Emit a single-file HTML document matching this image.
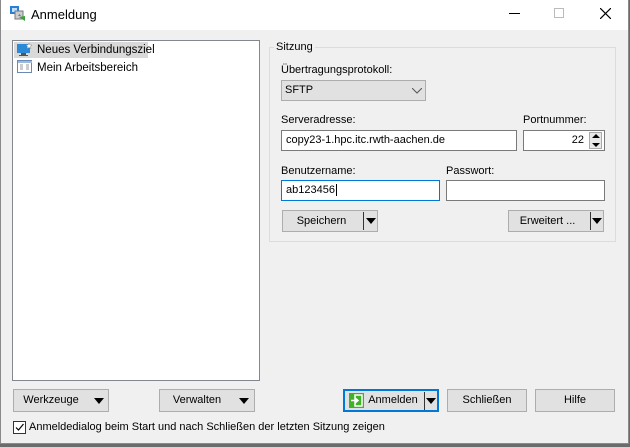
<!DOCTYPE html>
<html><head><meta charset="utf-8"><style>
*{box-sizing:border-box;margin:0;padding:0}
body{width:630px;height:447px;background:#6b6b6b;font-family:"Liberation Sans",sans-serif;font-size:11px;color:#000;position:relative;overflow:hidden}
.win{position:absolute;left:0;top:0;width:629px;height:444px;background:#f0f0f0}
.bd{position:absolute;left:0;top:0;width:629px;height:444px;border:1px solid #8a8a8a;border-top:none}
.title{position:absolute;left:0;top:0;width:628px;height:30px;background:#fff}
.a{position:absolute;white-space:nowrap}
.inp{position:absolute;background:#fff;border:1px solid #7a7a7a;padding:3px 4px;line-height:13px}
.btn{position:absolute;background:#e1e1e1;border:1px solid #adadad;text-align:center;line-height:20px}
.tri{position:absolute;width:0;height:0;border-left:5px solid transparent;border-right:5px solid transparent;border-top:6px solid #000}
</style></head><body>
<div class="win">
<div class="title">
<svg class="a" style="left:9px;top:5px" width="18" height="18" viewBox="0 0 18 18"><rect x="1" y="1" width="9" height="8" fill="#2a7fd4"/><rect x="3" y="3" width="5" height="4" fill="#bfe0ff"/><rect x="6" y="6" width="8" height="8" fill="#ccc" stroke="#777"/><path d="M9 11l3 0l-1.5 -2z M10 12l6 4l0-5z" fill="#3aa23a"/></svg>
<div class="a" style="left:31px;top:7px;font-size:13px">Anmeldung</div>
<div class="a" style="left:509px;top:13px;width:11px;height:1px;background:#000"></div>
<div class="a" style="left:554px;top:8px;width:10px;height:10px;border:1px solid #bbb"></div>
<svg class="a" style="left:600px;top:8px" width="11" height="11"><path d="M0 0L11 11M11 0L0 11" stroke="#000" stroke-width="1.2"/></svg>
</div>
<div class="a" style="left:12px;top:40px;width:248px;height:341px;background:#fff;border:1px solid #828790"></div>
<div class="a" style="left:14px;top:42px;width:134px;height:16px;background:#d9d9d9"></div>
<svg class="a" style="left:17px;top:43px" width="16" height="14"><rect x="0" y="1" width="13" height="9" fill="#2b8ad8"/><rect x="4" y="10" width="5" height="2" fill="#555"/><rect x="2" y="12" width="9" height="1" fill="#555"/><path d="M12 0l1 2 2 0-1.5 1.5.5 2-2-1-2 1 .5-2L9 2h2z" fill="#fff" stroke="#888" stroke-width=".5"/></svg>
<div class="a" style="left:37px;top:44px;font-size:11.5px">Neues Verbindungsziel</div>
<svg class="a" style="left:17px;top:60px" width="16" height="14"><rect x=".5" y=".5" width="14" height="12" fill="#fff" stroke="#6a8ab5"/><rect x="1" y="1" width="14" height="2" fill="#9cb8dc"/><path d="M3 5h3M3 7h3M3 9h3M9 5h3M9 7h3M9 9h3" stroke="#999"/></svg>
<div class="a" style="left:37px;top:62px;font-size:11.5px">Mein Arbeitsbereich</div>

<div class="a" style="left:269px;top:47px;width:347px;height:195px;border:1px solid #dcdcdc"></div>
<div class="a" style="left:274px;top:41px;background:#f0f0f0;padding:0 2px">Sitzung</div>
<div class="a" style="left:281px;top:64px">Übertragungsprotokoll:</div>
<div class="btn" style="left:281px;top:80px;width:145px;height:21px;text-align:left;padding-left:3px;line-height:19px">SFTP</div>
<svg class="a" style="left:412px;top:88px" width="10" height="6"><path d="M0 0L5 5L10 0" stroke="#555" fill="none"/></svg>
<div class="a" style="left:281px;top:114px">Serveradresse:</div>
<div class="inp" style="left:281px;top:130px;width:236px;height:21px">copy23-1.hpc.itc.rwth-aachen.de</div>
<div class="a" style="left:523px;top:114px">Portnummer:</div>
<div class="inp" style="left:523px;top:130px;width:82px;height:21px;text-align:right;padding-right:20px">22</div>
<div class="a" style="left:589px;top:132px;width:13px;height:17px;background:#e8e8e8;border:1px solid #aaa"></div>
<svg class="a" style="left:592px;top:134px" width="8" height="14"><path d="M0 4L4 0L8 4ZM0 9L8 9L4 13Z" fill="#000"/></svg>
<div class="a" style="left:281px;top:165px">Benutzername:</div>
<div class="inp" style="left:281px;top:180px;width:159px;height:21px;border-color:#0078d7">ab123456<span style="border-left:1px solid #000;margin-left:1px"></span></div>
<div class="a" style="left:446px;top:165px">Passwort:</div>
<div class="inp" style="left:446px;top:180px;width:159px;height:21px"></div>
<div class="btn" style="left:282px;top:210px;width:96px;height:22px;padding-right:17px">Speichern</div>
<div class="a" style="left:363px;top:212px;width:1px;height:18px;background:#333"></div>
<div class="tri" style="left:366px;top:218px"></div>
<div class="btn" style="left:508px;top:210px;width:96px;height:22px;padding-right:17px">Erweitert ...</div>
<div class="a" style="left:590px;top:212px;width:1px;height:18px;background:#333"></div>
<div class="tri" style="left:592px;top:218px"></div>

<div class="btn" style="left:13px;top:389px;width:96px;height:23px;padding-right:20px">Werkzeuge</div>
<div class="tri" style="left:94px;top:398px"></div>
<div class="btn" style="left:159px;top:389px;width:96px;height:23px;padding-right:20px">Verwalten</div>
<div class="tri" style="left:239px;top:398px"></div>
<div class="btn" style="left:343px;top:389px;width:96px;height:23px;border:2px solid #0078d7;padding-left:14px;padding-right:10px;line-height:19px">Anmelden</div>
<svg class="a" style="left:349px;top:393px" width="15" height="15"><rect width="15" height="15" fill="#43b02a"/><rect x="6" y="2" width="7" height="11" fill="none" stroke="#fff" stroke-width="1.5"/><path d="M2 7.5h6M6 5l3 2.5-3 2.5" stroke="#fff" stroke-width="1.5" fill="none"/></svg>
<div class="a" style="left:424px;top:392px;width:1px;height:18px;background:#333"></div>
<div class="tri" style="left:426px;top:398px"></div>
<div class="btn" style="left:447px;top:389px;width:80px;height:23px">Schließen</div>
<div class="btn" style="left:535px;top:389px;width:80px;height:23px">Hilfe</div>
<div class="a" style="left:13px;top:421px;width:13px;height:13px;border:1px solid #333;background:#fff"></div>
<svg class="a" style="left:14px;top:422px" width="11" height="11"><path d="M2 5.5L4.5 8L9.5 2" stroke="#000" fill="none" stroke-width="1.2"/></svg>
<div class="a" style="left:29px;top:421px">Anmeldedialog beim Start und nach Schließen der letzten Sitzung zeigen</div>
<div class="bd"></div>
</div>
</body></html>
